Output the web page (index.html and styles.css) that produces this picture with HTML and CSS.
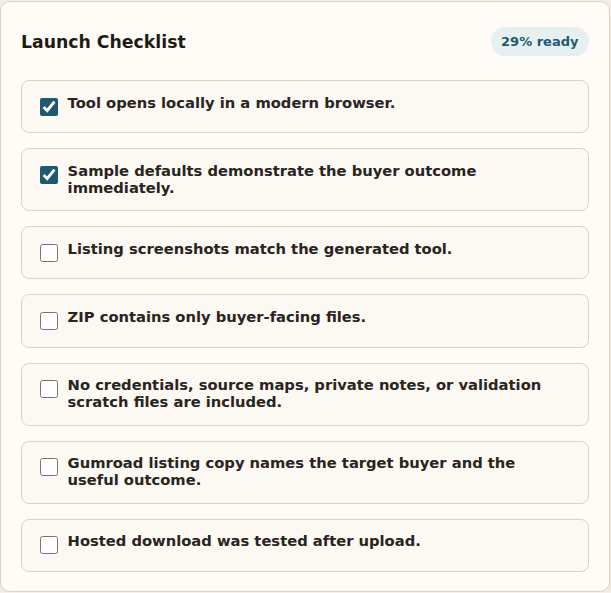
FILE: index.html
```html
<!DOCTYPE html>
<html lang="en">
<head>
<meta charset="utf-8">
<title>Launch Checklist</title>
<link rel="stylesheet" href="styles.css">
</head>
<body>
<section class="card">
  <header class="card-header">
    <h2 class="title">Launch Checklist</h2>
    <span class="badge">29% ready</span>
  </header>
  <ul class="list">
    <li class="item"><label class="row"><input type="checkbox" class="check" checked><span class="text">Tool opens locally in a modern browser.</span></label></li>
    <li class="item"><label class="row"><input type="checkbox" class="check" checked><span class="text">Sample defaults demonstrate the buyer outcome immediately.</span></label></li>
    <li class="item"><label class="row"><input type="checkbox" class="check"><span class="text">Listing screenshots match the generated tool.</span></label></li>
    <li class="item"><label class="row"><input type="checkbox" class="check"><span class="text">ZIP contains only buyer-facing files.</span></label></li>
    <li class="item"><label class="row"><input type="checkbox" class="check"><span class="text">No credentials, source maps, private notes, or validation scratch files are included.</span></label></li>
    <li class="item"><label class="row"><input type="checkbox" class="check"><span class="text">Gumroad listing copy names the target buyer and the useful outcome.</span></label></li>
    <li class="item"><label class="row"><input type="checkbox" class="check"><span class="text">Hosted download was tested after upload.</span></label></li>
  </ul>
</section>
</body>
</html>
```
FILE: styles.css
```css
html, body {
  margin: 0;
  padding: 0;
  background: #f4f0e9;
}
body {
  font-family: "DejaVu Sans", "Liberation Sans", sans-serif;
  color: #2a241f;
  padding-top: 1px;
}
.card {
  box-sizing: border-box;
  width: 610px;
  height: 591px;
  background: #fffcf8;
  border: 1px solid #ddd3c4;
  border-radius: 10px;
  padding: 25px 20px 20px;
  box-shadow: 0 6px 20px rgba(80, 60, 30, 0.06);
}
.card-header {
  display: flex;
  align-items: center;
  justify-content: space-between;
  margin-bottom: 24px;
}
.title {
  margin: 0;
  font-size: 17.3px;
  font-weight: bold;
  color: #1e1a16;
}
.badge {
  display: inline-block;
  font-size: 13px;
  font-weight: bold;
  color: #1d5a70;
  background: #e7f0f0;
  padding: 7px 10.5px;
  border-radius: 999px;
}
.list {
  list-style: none;
  margin: 0;
  padding: 0;
  display: flex;
  flex-direction: column;
  gap: 15px;
}
.item {
  background: #fcf8f2;
  border: 1px solid #ddd3c4;
  border-radius: 8px;
  padding: 13.6px;
}
.row {
  display: flex;
  align-items: flex-start;
  gap: 7px;
  padding-right: 24px;
  cursor: pointer;
}
.check {
  width: 18px;
  height: 18px;
  margin: 3px 3px 3px 4px;
  flex: none;
  accent-color: #1d5a70;
}
.text {
  font-size: 14.72px;
  font-weight: bold;
  line-height: 1.15;
  color: #2a241f;
}
```
